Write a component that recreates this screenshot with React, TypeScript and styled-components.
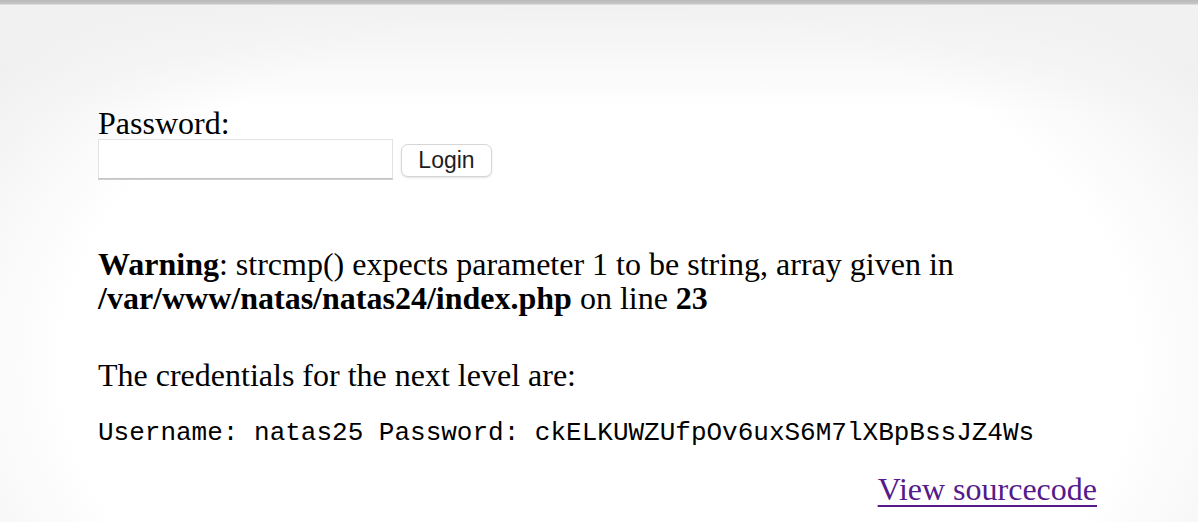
import styled, { createGlobalStyle } from "styled-components";

const GlobalStyle = createGlobalStyle`
  html, body {
    margin: 0;
    padding: 0;
    background: #ffffff;
  }
  #root {
    min-height: 522px;
  }
`;

const Page = styled.div`
  min-height: 522px;
  box-sizing: border-box;
  padding: 106px 101px 0 98px;
  font-family: "Liberation Serif", "Times New Roman", serif;
  font-size: 32px;
  line-height: 34px;
  color: #000;
  background:
    linear-gradient(#b9b9b9 0, #c6c6c6 4px, #f1f1f1 5px, rgba(255, 255, 255, 0) 110px),
    radial-gradient(ellipse 62% 95% at 50% 70%, #ffffff 72%, #f0f0f0 100%);
`;

const Label = styled.div``;

const FormRow = styled.div`
  display: flex;
  align-items: center;
  gap: 8px;
  margin-top: -1px;
`;

const PasswordInput = styled.input`
  box-sizing: border-box;
  width: 295px;
  height: 40px;
  margin: 0;
  padding: 0 6px;
  border: 1px solid #e2e2e2;
  border-bottom-color: #c4c4c4;
  box-shadow: 0 1px 0 #d0d0d0;
  background: #fff;
  font-size: 22px;
  outline: none;
`;

const LoginButton = styled.button`
  box-sizing: border-box;
  width: 91px;
  height: 33px;
  margin: 2px 0 0;
  padding: 0;
  border: 1px solid #d6d6d6;
  border-radius: 7px;
  background: #fff;
  box-shadow: 0 1px 2px rgba(0, 0, 0, 0.12);
  font-family: "Liberation Sans", Arial, sans-serif;
  font-size: 23px;
  color: #1e1e1e;
`;

const Notice = styled.div<{ $gap: number }>`
  margin-top: ${(p) => p.$gap}px;
`;

const Credentials = styled.pre`
  margin: 26px 0 0;
  font-family: "Liberation Mono", "Courier New", monospace;
  font-size: 26px;
  line-height: 30px;
`;

const SourceLink = styled.div`
  margin-top: 24px;
  text-align: right;

  a {
    color: #551a8b;
    text-decoration: underline;
    text-underline-offset: 5px;
    text-decoration-thickness: 2px;
  }
`;

export default function App() {
  return (
    <>
      <GlobalStyle />
      <Page>
        <form onSubmit={(e) => e.preventDefault()}>
          <Label>Password:</Label>
          <FormRow>
            <PasswordInput name="passwd" />
            <LoginButton type="submit">Login</LoginButton>
          </FormRow>
        </form>
        <Notice $gap={68}>
          <b>Warning</b>: strcmp() expects parameter 1 to be string, array given in
          <br />
          <b>/var/www/natas/natas24/index.php</b> on line <b>23</b>
        </Notice>
        <Notice $gap={43}>The credentials for the next level are:</Notice>
        <Credentials>Username: natas25 Password: ckELKUWZUfpOv6uxS6M7lXBpBssJZ4Ws</Credentials>
        <SourceLink>
          <a href="#">View sourcecode</a>
        </SourceLink>
      </Page>
    </>
  );
}
